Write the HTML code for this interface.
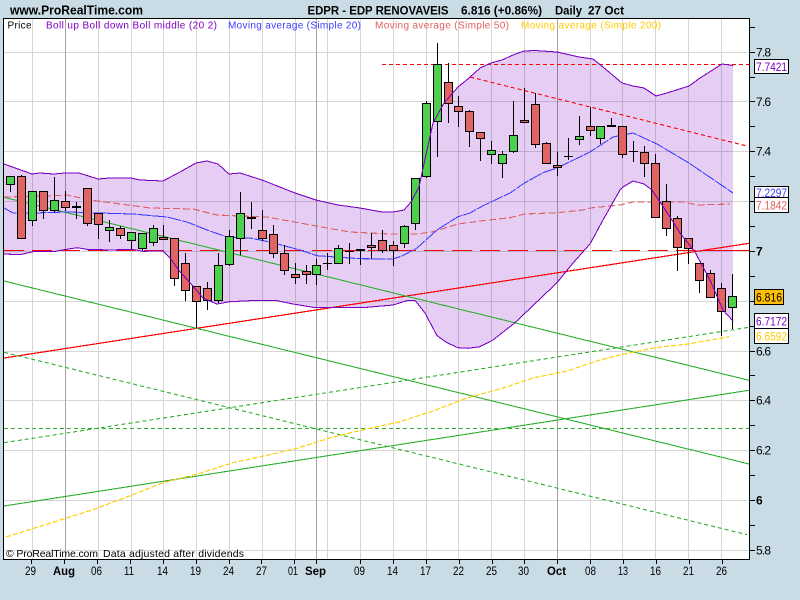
<!DOCTYPE html>
<html><head><meta charset="utf-8"><title>EDPR</title>
<style>
html,body{margin:0;padding:0;background:#c9dce6;width:800px;height:600px;overflow:hidden}
svg{display:block;position:absolute;left:0;top:0}
text{font-family:"Liberation Sans",Arial,sans-serif;fill:#000}
</style></head><body>
<svg width="800" height="600" viewBox="0 0 800 600" xmlns="http://www.w3.org/2000/svg">
<rect width="800" height="600" fill="#c9dce6"/>
<rect x="4" y="19" width="745" height="540" fill="#ffffff"/>
<g shape-rendering="crispEdges" fill="#d6d6d6">
<rect x="32" y="19" width="1" height="540"/><rect x="98" y="19" width="1" height="540"/><rect x="131" y="19" width="1" height="540"/><rect x="163" y="19" width="1" height="540"/><rect x="196" y="19" width="1" height="540"/><rect x="229" y="19" width="1" height="540"/><rect x="262" y="19" width="1" height="540"/><rect x="295" y="19" width="1" height="540"/><rect x="327" y="19" width="1" height="540"/><rect x="360" y="19" width="1" height="540"/><rect x="393" y="19" width="1" height="540"/><rect x="426" y="19" width="1" height="540"/><rect x="458" y="19" width="1" height="540"/><rect x="491" y="19" width="1" height="540"/><rect x="524" y="19" width="1" height="540"/><rect x="590" y="19" width="1" height="540"/><rect x="622" y="19" width="1" height="540"/><rect x="655" y="19" width="1" height="540"/><rect x="688" y="19" width="1" height="540"/><rect x="721" y="19" width="1" height="540"/>
<rect x="4" y="52" width="745" height="1"/><rect x="4" y="101" width="745" height="1"/><rect x="4" y="151" width="745" height="1"/><rect x="4" y="201" width="745" height="1"/><rect x="4" y="251" width="745" height="1"/><rect x="4" y="301" width="745" height="1"/><rect x="4" y="351" width="745" height="1"/><rect x="4" y="400" width="745" height="1"/><rect x="4" y="450" width="745" height="1"/><rect x="4" y="500" width="745" height="1"/><rect x="4" y="550" width="745" height="1"/>
</g>
<g shape-rendering="crispEdges" fill="#a3a3a3">
<rect x="65" y="19" width="1" height="540"/><rect x="316" y="19" width="1" height="540"/><rect x="557" y="19" width="1" height="540"/>
</g>
<path style="mix-blend-mode:multiply" fill="#e5cdf3" d="M4 164L32 174L40 173L54 174L65 173L79 173L98 179L110 178L131 178L140 180L163 181L180 172L196 163L207 161L218 164L229 174L240 173L262 180L295 193L316 200L338 205L360 208L382 212L393 212L404 210L411 202L419 187L422 173L433 123L444 103L458 87L469 78L480 68L491 63L502 60L513 55L524 51L535 50.5L557 52L579 57L593 59L603 67L622 83L633 86L644 88L656 96L667 93L689 86L700 78L722 64L733 65.5V321L723 310L710 280L695 252L680 233L670 217L660 202L652 190L644 184L633 181L623 187L620 190L603 220L590 244L573 263L557 282.7L515 322.7L493 340L480 346.7L468 348.3L458 347.7L447 342.7L437 335.7L425 313L415 300.3L407 300.7L393 305L367 307.3L313 307.3L293 304L277 300.7L250 300.7L230 301.7L217 304L203 298L192 285L180 271.7L170 258L163 251L143 251.3L132 249.3L110 250L87 249.3L77 247.7L67 249.3L53 251.7L33 251.7L20 254.7L4 254Z"/>
<g shape-rendering="crispEdges" fill="none" stroke-width="1">
<path stroke="#ff0000" stroke-width="1.2" d="M4 358L749 243.3"/>
<path stroke="#ff0000" stroke-width="1.3" stroke-dasharray="20 8" d="M4 250.5H749"/>
<path stroke="#ff0000" stroke-width="1.3" d="M700 250.5H749"/>
<path stroke="#ff0000" stroke-dasharray="4 3" d="M382 64.5H749"/>
<path stroke="#ff0000" stroke-width="1.1" stroke-dasharray="4 3" d="M470 77L747 146"/>
<path stroke="#2fb02f" stroke-width="1.1" d="M4 197.3L749 380.3M4 281L749 464M4 506L749 390.3"/>
<path stroke="#2fb02f" stroke-width="1.1" stroke-dasharray="4 3" d="M4 352.3L747 534.7M4 442.7L749 327.3M4 428.5H749"/>
<path stroke="#ffcc00" stroke-width="1.15" stroke-dasharray="5 2" d="M6 537L92 510L132 495L163 482.7L200 473.3L233 462.7L267 455.3L297 448.3L333 437L367 429L400 421.7L433 411L467 398L500 389L533 378L567 371L600 360L620 355L655 347.7L688 344L729 336.7"/>
<path stroke="#e06060" stroke-width="1.1" stroke-dasharray="7 3" d="M4 197L47 196L67 195L90 200L113 203L150 208L193 209L217 215L240 216L267 217L300 223L327 228L350 232L390 234L417 234L433 231.7L458 224L483 220.7L510 217.7L525 214L557 212.7L583 210L590 208L620 205L633 202L683 202L697 205L730 204"/>
<path stroke="#3c3cff" stroke-width="1.05" stroke-dasharray="14 1" d="M4 208L13 213L33 213L67 212L133 214L167 217L187 222L207 230L227 237L250 238L270 242L300 250L317 255.7L360 258.7L393 259L402 256L417 248L437 230L450 221.7L458 216.7L470 213L483 205.7L510 193L525 182.7L543 172.7L557 168L590 152L613 137L633 133L657 144L689 163L733 193"/>
</g>
<g shape-rendering="crispEdges" stroke-width="1">
<path fill="none" stroke="#000" d="M10.5 176V192M21.5 175V238M32.5 191V226M43.5 191V219M54.5 177V213M65.5 191V211M76.5 202V219M87.5 188V226M98.5 213V239M109.5 220V242M120.5 226V239M131.5 232V249M142.5 233V251M153.5 225V246M163.5 225V239M174.5 238V286M185.5 253V301M196.5 286V328M207.5 282V310M218.5 253V304M229.5 230V266M240.5 192V255M251.5 202V229M262.5 210V241M273.5 225V258M284.5 245V275M295.5 263V284M306.5 265V284M316.5 259V285M327.5 253V270M338.5 245V263M349.5 243V264M360.5 250V265M371.5 233V259M382.5 230V253M393.5 241V266M404.5 225V248M415.5 178V230M426.5 101V178M437.5 43V157M448.5 63V123M458.5 96V127M469.5 110V147M480.5 132V161M491.5 141V164M502.5 151V178M513.5 101V153M524.5 88V123M535.5 93V148M546.5 142V163M557.5 152V176M568.5 138V160M579.5 116V145M590.5 107V136M600.5 126V144M611.5 118V126M622.5 126V158M633.5 141V162M644.5 146V177M655.5 154V217M666.5 184V236M677.5 216V271M688.5 238V264M699.5 263V293M710.5 270V297M721.5 283V336M732.5 274V329"/>
<path fill="#4dd04d" stroke="#000" d="M6.5 176.5h8v8h-8zM28.5 191.5h8v29h-8zM50.5 200.5h8v10h-8zM105.5 227.5h8v3h-8zM127.5 232.5h8v8h-8zM138.5 233.5h8v15h-8zM149.5 228.5h8v14h-8zM214.5 265.5h8v35h-8zM225.5 236.5h8v28h-8zM236.5 213.5h8v25h-8zM312.5 265.5h8v9h-8zM334.5 248.5h8v15h-8zM400.5 226.5h8v17h-8zM411.5 178.5h8v45h-8zM422.5 103.5h8v73h-8zM433.5 64.5h8v57h-8zM487.5 150.5h8v4h-8zM498.5 154.5h8v9h-8zM509.5 135.5h8v16h-8zM575.5 136.5h8v3h-8zM596.5 126.5h8v12h-8zM728.5 296.5h8v11h-8z"/>
<path fill="#e06464" stroke="#000" d="M17.5 176.5h8v62h-8zM39.5 191.5h8v19h-8zM61.5 201.5h8v6h-8zM83.5 188.5h8v35h-8zM94.5 213.5h8v11h-8zM116.5 228.5h8v7h-8zM159.5 237.5h8v2h-8zM170.5 238.5h8v40h-8zM181.5 263.5h8v27h-8zM192.5 286.5h8v15h-8zM203.5 288.5h8v12h-8zM258.5 230.5h8v8h-8zM269.5 234.5h8v19h-8zM280.5 253.5h8v17h-8zM291.5 274.5h8v3h-8zM302.5 271.5h8v3h-8zM367.5 245.5h8v2h-8zM378.5 240.5h8v10h-8zM389.5 245.5h8v5h-8zM444.5 82.5h8v21h-8zM454.5 106.5h8v5h-8zM465.5 111.5h8v20h-8zM476.5 132.5h8v6h-8zM520.5 120.5h8v2h-8zM531.5 104.5h8v40h-8zM542.5 143.5h8v20h-8zM553.5 165.5h8v2h-8zM586.5 126.5h8v4h-8zM618.5 126.5h8v28h-8zM640.5 152.5h8v11h-8zM651.5 163.5h8v54h-8zM662.5 201.5h8v27h-8zM673.5 218.5h8v29h-8zM684.5 238.5h8v10h-8zM695.5 263.5h8v17h-8zM706.5 273.5h8v24h-8zM717.5 288.5h8v23h-8z"/>
<path fill="none" stroke="#000" d="M72 207.5h9M72 206.5h9M247 218.5h9M247 217.5h9M323 263.5h9M345 251.5h9M356 250.5h9M356 249.5h9M564 156.5h9M607 126.5h9M607 125.5h9M629 151.5h9"/>
</g>
<g shape-rendering="crispEdges" fill="none" stroke="#7a00c4" stroke-width="1.05">
<path d="M4 164L32 174L40 173L54 174L65 173L79 173L98 179L110 178L131 178L140 180L163 181L180 172L196 163L207 161L218 164L229 174L240 173L262 180L295 193L316 200L338 205L360 208L382 212L393 212L404 210L411 202L419 187L422 173L433 123L444 103L458 87L469 78L480 68L491 63L502 60L513 55L524 51L535 50.5L557 52L579 57L593 59L603 67L622 83L633 86L644 88L656 96L667 93L689 86L700 78L722 64L733 65.5"/>
<path d="M4 254L20 254.7L33 251.7L53 251.7L67 249.3L77 247.7L87 249.3L110 250L132 249.3L143 251.3L163 251L170 258L180 271.7L192 285L203 298L217 304L230 301.7L250 300.7L277 300.7L293 304L313 307.3L367 307.3L393 305L407 300.7L415 300.3L425 313L437 335.7L447 342.7L458 347.7L468 348.3L480 346.7L493 340L515 322.7L557 282.7L573 263L590 244L603 220L620 190L623 187L633 181L644 184L652 190L660 202L670 217L680 233L695 252L710 280L723 310L733 321"/>
</g>
<g shape-rendering="crispEdges" fill="none" stroke="#000" stroke-width="1">
<path d="M3.5 18V560M3 18.5H750M749.5 18V560M3 559.5H750"/>
<path d="M750 27.5h5M750 52.5h5M750 77.5h5M750 101.5h5M750 126.5h5M750 151.5h5M750 176.5h5M750 201.5h5M750 226.5h5M750 251.5h5M750 276.5h5M750 301.5h5M750 326.5h5M750 351.5h5M750 375.5h5M750 400.5h5M750 425.5h5M750 450.5h5M750 475.5h5M750 500.5h5M750 525.5h5M750 550.5h5"/>
<path d="M31.5 560v4M64.5 560v4M97.5 560v4M130.5 560v4M163.5 560v4M196.5 560v4M229.5 560v4M261.5 560v4M294.5 560v4M316.5 560v4M360.5 560v4M393.5 560v4M426.5 560v4M459.5 560v4M492.5 560v4M524.5 560v4M557.5 560v4M590.5 560v4M623.5 560v4M656.5 560v4M689.5 560v4M722.5 560v4"/>
</g>
<text x="10" y="14.5" font-size="12.5" font-weight="bold" textLength="133" lengthAdjust="spacingAndGlyphs">www.ProRealTime.com</text>
<text x="307.5" y="14.5" font-size="12" font-weight="bold" textLength="141" lengthAdjust="spacingAndGlyphs">EDPR - EDP RENOVAVEIS</text>
<text x="461" y="14.5" font-size="12" font-weight="bold" textLength="81" lengthAdjust="spacingAndGlyphs">6.816 (+0.86%)</text>
<text x="555" y="14.5" font-size="12" font-weight="bold" textLength="27" lengthAdjust="spacingAndGlyphs">Daily</text>
<text x="588" y="14.5" font-size="12" font-weight="bold" textLength="36" lengthAdjust="spacingAndGlyphs">27 Oct</text>
<g font-size="10">
<text x="7.5" y="28.5" textLength="24">Price</text>
<text x="46" y="28.5" textLength="171" style="fill:#8000c4">Boll up Boll down Boll middle (20 2)</text>
<text x="228" y="28.5" textLength="133" style="fill:#3c3cff">Moving average (Simple 20)</text>
<text x="375" y="28.5" textLength="134" style="fill:#e06060">Moving average (Simple 50)</text>
<text x="521" y="28.5" textLength="140" style="fill:#ffcc00">Moving average (Simple 200)</text>
</g>
<text x="6" y="557" font-size="10.5" textLength="92">© ProRealTime.com</text>
<text x="103" y="557" font-size="10.5" textLength="141">Data adjusted after dividends</text>
<g font-size="12">
<text x="756" y="56.5" textLength="15">7.8</text>
<text x="756" y="106" textLength="15">7.6</text>
<text x="756" y="155.5" textLength="15">7.4</text>
<text x="756" y="255.5" font-weight="bold" textLength="7">7</text>
<text x="756" y="355.5" textLength="15">6.6</text>
<text x="756" y="404.5" textLength="15">6.4</text>
<text x="756" y="454.5" textLength="15">6.2</text>
<text x="756" y="504.5" font-weight="bold" textLength="7">6</text>
<text x="756" y="554.5" textLength="15">5.8</text>
</g>
<g shape-rendering="crispEdges" stroke="#000" fill="#fff">
<rect x="754.5" y="59.5" width="34" height="14"/>
<rect x="754.5" y="186.5" width="34" height="11"/>
<rect x="754.5" y="197.5" width="34" height="15"/>
<rect x="754.5" y="289.5" width="29" height="15" fill="#ffbf00"/>
<rect x="754.5" y="313.5" width="34" height="15"/>
<rect x="754.5" y="328.5" width="34" height="15"/>
</g>
<g font-size="12">
<text x="756" y="71" textLength="31" lengthAdjust="spacingAndGlyphs" style="fill:#7a00c4">7.7421</text>
<text x="756" y="197" textLength="31" lengthAdjust="spacingAndGlyphs" style="fill:#3c3cff">7.2297</text>
<text x="756" y="209.5" textLength="31" lengthAdjust="spacingAndGlyphs" style="fill:#e06060">7.1842</text>
<text x="756" y="301.5" textLength="26" lengthAdjust="spacingAndGlyphs">6.816</text>
<text x="756" y="325.5" textLength="31" lengthAdjust="spacingAndGlyphs" style="fill:#7a00c4">6.7172</text>
<text x="756" y="340.5" textLength="31" lengthAdjust="spacingAndGlyphs" style="fill:#ffcc00">6.6592</text>
</g>
<g font-size="11.5">
<text x="25" y="575" textLength="11" lengthAdjust="spacingAndGlyphs">29</text>
<text x="53" y="575" font-weight="bold" textLength="22" lengthAdjust="spacingAndGlyphs">Aug</text>
<text x="91" y="575" textLength="11" lengthAdjust="spacingAndGlyphs">06</text>
<text x="124" y="575" textLength="10" lengthAdjust="spacingAndGlyphs">11</text>
<text x="157" y="575" textLength="11" lengthAdjust="spacingAndGlyphs">14</text>
<text x="190" y="575" textLength="11" lengthAdjust="spacingAndGlyphs">19</text>
<text x="223" y="575" textLength="11" lengthAdjust="spacingAndGlyphs">24</text>
<text x="256" y="575" textLength="11" lengthAdjust="spacingAndGlyphs">27</text>
<text x="288" y="575" textLength="10" lengthAdjust="spacingAndGlyphs">01</text>
<text x="305" y="575" font-weight="bold" textLength="21" lengthAdjust="spacingAndGlyphs">Sep</text>
<text x="354" y="575" textLength="11" lengthAdjust="spacingAndGlyphs">09</text>
<text x="387" y="575" textLength="11" lengthAdjust="spacingAndGlyphs">14</text>
<text x="420" y="575" textLength="11" lengthAdjust="spacingAndGlyphs">17</text>
<text x="453" y="575" textLength="11" lengthAdjust="spacingAndGlyphs">22</text>
<text x="486" y="575" textLength="11" lengthAdjust="spacingAndGlyphs">25</text>
<text x="518" y="575" textLength="11" lengthAdjust="spacingAndGlyphs">30</text>
<text x="547" y="575" font-weight="bold" textLength="19" lengthAdjust="spacingAndGlyphs">Oct</text>
<text x="585" y="575" textLength="11" lengthAdjust="spacingAndGlyphs">08</text>
<text x="618" y="575" textLength="10" lengthAdjust="spacingAndGlyphs">13</text>
<text x="650" y="575" textLength="11" lengthAdjust="spacingAndGlyphs">16</text>
<text x="683" y="575" textLength="11" lengthAdjust="spacingAndGlyphs">21</text>
<text x="716" y="575" textLength="11" lengthAdjust="spacingAndGlyphs">26</text>
</g>
</svg>
</body></html>
